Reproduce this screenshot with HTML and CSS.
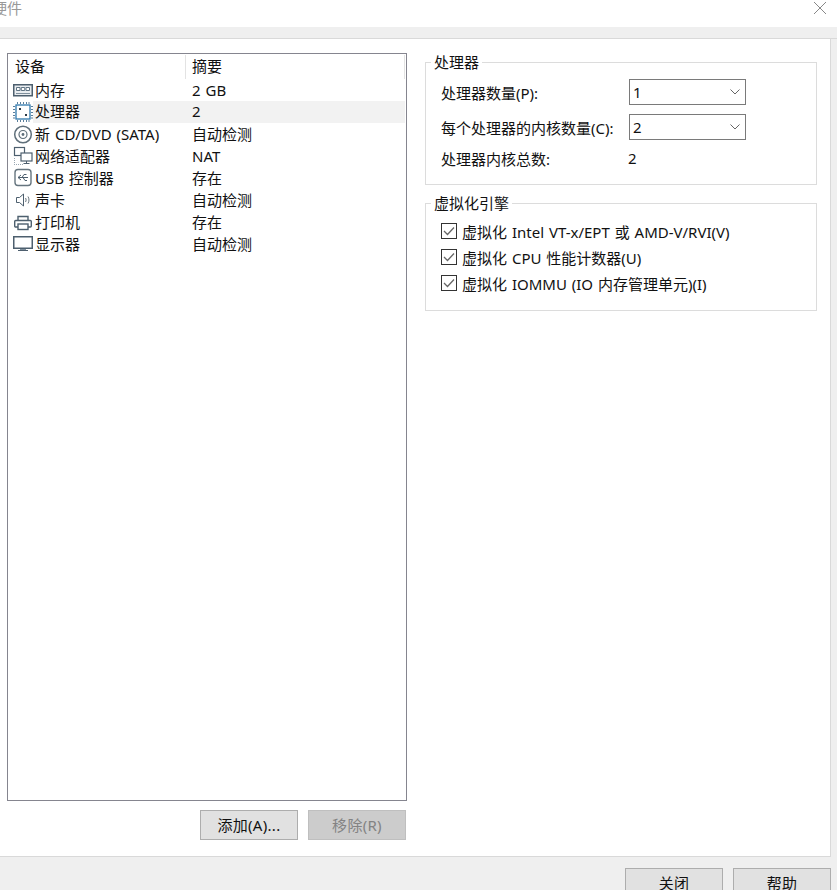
FILE: index.html
```html
<!DOCTYPE html>
<html lang="zh-CN">
<head>
    <meta charset="UTF-8">
    <title>硬件</title>
    <link rel="stylesheet" href="styles.css">
</head>
<body>
<div class="window">
    <div class="titlebar">
        <span class="title">硬件</span>
        <svg class="close" width="14" height="14" viewBox="0 0 14 14"><path d="M1 1L13 13M13 1L1 13" stroke="#888" fill="none"/></svg>
    </div>
    <div class="band"></div>
    <div class="content">
        <div class="left">
            <div class="device-list">
                <div class="list-head">
                    <div class="col-name">设备</div>
                    <div class="col-sum">摘要</div>
                </div>
                <div class="row">
                    <svg class="icon" width="20" height="22" viewBox="0 0 20 22"><rect x="0.750" y="5.750" width="18.500" height="11" fill="#e9edf0" stroke="#4d5f6e" stroke-width="1.500"/><path d="M3.500 8.500h3.500v3H3.500zM8.250 8.500h3.500v3H8.250zM13 8.500h3.500v3H13z" fill="#fff" stroke="#5f7383"/><path d="M3 14.500h14" stroke="#7f8f9c"/></svg>
                    <div class="col-name">内存</div><div class="col-sum">2 GB</div>
                </div>
                <div class="row selected">
                    <svg class="icon" width="20" height="22" viewBox="0 0 20 22"><rect x="3" y="4" width="14" height="14" fill="#fff" stroke="#2f78ad" stroke-width="1.300"/><path d="M4.500 1v2M7.500 1v2M10.500 1v2M13.500 1v2M16 1v2M4.500 19v2M7.500 19v2M10.500 19v2M13.500 19v2M16 19v2M0 5.500h2M0 8.500h2M0 11.500h2M0 14.500h2M0 17h2M18 5.500h2M18 8.500h2M18 11.500h2M18 14.500h2M18 17h2" stroke="#5a7f9c"/><path d="M6 7h2v2H6zM12 13h2v2h-2z" fill="#2b3a46"/></svg>
                    <div class="col-name">处理器</div><div class="col-sum">2</div>
                </div>
                <div class="row">
                    <svg class="icon" width="20" height="22" viewBox="0 0 20 22"><circle cx="10" cy="11.500" r="8.300" fill="#fff" stroke="#5f6f7a" stroke-width="1.500"/><circle cx="10" cy="11.500" r="4" fill="none" stroke="#5f6f7a" stroke-width="1.200"/><circle cx="10" cy="11.500" r="1.400" fill="#5f6f7a"/></svg>
                    <div class="col-name">新 CD/DVD (SATA)</div><div class="col-sum">自动检测</div>
                </div>
                <div class="row">
                    <svg class="icon" width="20" height="22" viewBox="0 0 20 22"><rect x="1.500" y="2.500" width="10" height="8" fill="#fff" stroke="#4d5f6e" stroke-width="1.200"/><rect x="8" y="8" width="11" height="8" fill="#fff" stroke="#4d5f6e" stroke-width="1.200"/><path d="M13.500 16v2M10.500 18.500h6" stroke="#4d5f6e"/><path d="M1 19.500h10M1.500 13v6" stroke="#9aa7b2" stroke-dasharray="1 1" fill="none"/></svg>
                    <div class="col-name">网络适配器</div><div class="col-sum">NAT</div>
                </div>
                <div class="row">
                    <svg class="icon" width="20" height="22" viewBox="0 0 20 22"><rect x="2" y="2.500" width="16" height="16" rx="3" fill="#fff" stroke="#66757f" stroke-width="1.400"/><path d="M5 10.500h10M8 8l-3 2.500 3 2.500M9 10.500l2-3h2.500M10 10.500l2 3h2" stroke="#4d5f6e" fill="none"/></svg>
                    <div class="col-name">USB 控制器</div><div class="col-sum">存在</div>
                </div>
                <div class="row">
                    <svg class="icon" width="20" height="22" viewBox="0 0 20 22"><path d="M3.500 8.500h3l4-3.500v12l-4-3.500h-3z" fill="#fff" stroke="#4d5f6e"/><path d="M12.500 9c.8 1.300.8 2.700 0 4M15 7.500c1.300 2 1.300 5 0 7" stroke="#6b7780" fill="none"/></svg>
                    <div class="col-name">声卡</div><div class="col-sum">自动检测</div>
                </div>
                <div class="row">
                    <svg class="icon" width="20" height="22" viewBox="0 0 20 22"><path d="M5 9.500V5.500h10V9.500" fill="#fff" stroke="#4d5f6e" stroke-width="1.400"/><rect x="1.700" y="9.500" width="16.600" height="6.500" rx="1" fill="#fff" stroke="#4d5f6e" stroke-width="1.400"/><rect x="5" y="13" width="10" height="5.500" fill="#fff" stroke="#4d5f6e" stroke-width="1.400"/></svg>
                    <div class="col-name">打印机</div><div class="col-sum">存在</div>
                </div>
                <div class="row">
                    <svg class="icon" width="20" height="22" viewBox="0 0 20 22"><rect x="0.750" y="3.750" width="18.500" height="11.500" fill="#fff" stroke="#4d5f6e" stroke-width="1.500"/><path d="M7 16.500h6" stroke="#7f8f9c"/><path d="M5 17.500h10" stroke="#4d5f6e"/></svg>
                    <div class="col-name">显示器</div><div class="col-sum">自动检测</div>
                </div>
            </div>
            <div class="list-actions">
                <button class="btn">添加(A)...</button>
                <button class="btn disabled">移除(R)</button>
            </div>
        </div>
        <div class="right">
            <fieldset class="group cpu-group">
                <legend>处理器</legend>
                <div class="form-row">
                    <label>处理器数量(P):</label>
                    <div class="select"><span>1</span><svg width="10" height="6" viewBox="0 0 10 6"><path d="M0.500 0.500l4.500 4.500 4.500-4.500" stroke="#666" fill="none"/></svg></div>
                </div>
                <div class="form-row">
                    <label>每个处理器的内核数量(C):</label>
                    <div class="select"><span>2</span><svg width="10" height="6" viewBox="0 0 10 6"><path d="M0.500 0.500l4.500 4.500 4.500-4.500" stroke="#666" fill="none"/></svg></div>
                </div>
                <div class="form-row total">
                    <label>处理器内核总数:</label>
                    <span class="value">2</span>
                </div>
            </fieldset>
            <fieldset class="group engine-group">
                <legend>虚拟化引擎</legend>
                <div class="check-row">
                    <svg class="check" width="16" height="16" viewBox="0 0 16 16"><rect x="0.500" y="0.500" width="15" height="15" fill="#fff" stroke="#333"/><path d="M3 8l3.500 3.500 6.500-7" stroke="#666" stroke-width="1.300" fill="none"/></svg>
                    <span>虚拟化 Intel VT-x/EPT 或 AMD-V/RVI(V)</span>
                </div>
                <div class="check-row">
                    <svg class="check" width="16" height="16" viewBox="0 0 16 16"><rect x="0.500" y="0.500" width="15" height="15" fill="#fff" stroke="#333"/><path d="M3 8l3.500 3.500 6.500-7" stroke="#666" stroke-width="1.300" fill="none"/></svg>
                    <span>虚拟化 CPU 性能计数器(U)</span>
                </div>
                <div class="check-row">
                    <svg class="check" width="16" height="16" viewBox="0 0 16 16"><rect x="0.500" y="0.500" width="15" height="15" fill="#fff" stroke="#333"/><path d="M3 8l3.500 3.500 6.500-7" stroke="#666" stroke-width="1.300" fill="none"/></svg>
                    <span>虚拟化 IOMMU (IO 内存管理单元)(I)</span>
                </div>
            </fieldset>
        </div>
    </div>
    <div class="footer">
        <button class="btn">关闭</button>
        <button class="btn">帮助</button>
    </div>
</div>
</body>
</html>
```

FILE: styles.css
```css
html, body {
    margin: 0;
    padding: 0;
}
body {
    font-family: "Noto Sans", "Noto Sans CJK SC", sans-serif;
    font-size: 15px;
    word-spacing: 1px;
    color: #111;
    background: #efefef;
}
.window {
    width: 837px;
    height: 890px;
    overflow: hidden;
}
.titlebar {
    height: 27px;
    background: white;
    display: flex;
    justify-content: space-between;
    align-items: flex-start;
}
.title {
    margin-left: -8px;
    line-height: 16px;
    color: #999;
}
.close {
    margin: 1px 10px 0 0;
}
.band {
    height: 11px;
    background: #efefef;
    border-bottom: 1px solid #d9d9d9;
}
.content {
    width: 831px;
    height: 818px;
    box-sizing: border-box;
    background: white;
    border-right: 1px solid #d9d9d9;
    border-bottom: 1px solid #d9d9d9;
    display: flex;
}
.left {
    width: 425px;
    padding: 14px 0 0 7px;
    box-sizing: border-box;
}
.device-list {
    width: 400px;
    height: 748px;
    box-sizing: border-box;
    border: 1px solid #85858f;
}
.list-head {
    display: flex;
    height: 24px;
    line-height: 23px;
    padding-top: 1px;
}
.list-head .col-name {
    width: 170px;
    padding-left: 7px;
    border-right: 1px solid #e3e3e3;
}
.list-head .col-sum {
    flex: 1;
    padding-left: 6px;
    margin-right: 1px;
    border-right: 1px solid #e3e3e3;
}
.row {
    display: flex;
    align-items: center;
    height: 22px;
    line-height: 21px;
}
.row .icon {
    flex: none;
    margin-left: 5px;
}
.row .col-name {
    width: 150px;
    padding-left: 2px;
}
.col-sum {
    padding-left: 7px;
}
.row.selected .col-name,
.row.selected .col-sum {
    height: 22px;
    background: #f2f2f2;
}
.row.selected .col-sum {
    flex: 1;
    margin-right: 1px;
}
.list-actions {
    display: flex;
    justify-content: flex-end;
    gap: 10px;
    width: 399px;
    margin-top: 9px;
}
.btn {
    width: 98px;
    height: 30px;
    padding: 0 0 2px;
    background: #e1e1e1;
    border: 1px solid #adadad;
    font-family: inherit;
    font-size: 15px;
    letter-spacing: 0.3px;
    color: #111;
}
.btn.disabled {
    background: #cccccc;
    border-color: #bfbfbf;
    color: #838383;
}
.right {
    width: 392px;
    padding-top: 14px;
}
.group {
    margin: 0;
    padding: 0 0 0 15px;
    border: 1px solid #dcdcdc;
    box-sizing: border-box;
    width: 392px;
}
.group legend {
    margin-left: -10px;
    padding: 0 3px;
    line-height: 18px;
}
.cpu-group {
    height: 132px;
    padding-top: 8px;
}
.engine-group {
    height: 117px;
    margin-top: 9px;
    padding-top: 6px;
}
.form-row {
    display: flex;
    align-items: center;
    height: 26px;
    margin-bottom: 9px;
}
.form-row label {
    width: 188px;
    white-space: nowrap;
}
.total {
    height: 20px;
    margin-top: -1px;
}
.select {
    width: 117px;
    height: 26px;
    box-sizing: border-box;
    border: 1px solid #7a7a7a;
    display: flex;
    align-items: center;
    justify-content: space-between;
    padding: 0 5px 0 3px;
}
.value {
    margin-left: -1px;
}
.check-row {
    display: flex;
    align-items: center;
    height: 26px;
}
.check {
    margin-right: 5px;
    flex: none;
}
.footer {
    display: flex;
    justify-content: flex-end;
    gap: 10px;
    padding: 11px 6px 0 0;
}
```
